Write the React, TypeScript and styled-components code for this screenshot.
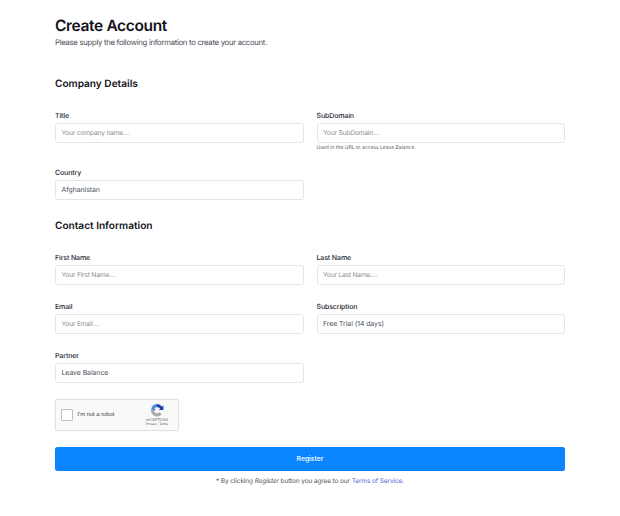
import React from "react";
import styled, { createGlobalStyle } from "styled-components";

const GlobalStyle = createGlobalStyle`
  html, body { margin: 0; padding: 0; background: #fff; }
  body {
    font-family: Inter, "Noto Sans", sans-serif;
    color: #12131a;
    text-rendering: geometricPrecision;
  }
  * { box-sizing: border-box; }
`;

const Page = styled.div`
  width: 620px;
  height: 516px;
  padding: 15px 55px 0;
  overflow: hidden;
  opacity: 0.999;
`;

const Title = styled.h1`
  margin: 0;
  font-size: 15.5px;
  line-height: 21px;
  font-weight: 600;
  letter-spacing: -0.35px;
`;

const Lead = styled.p`
  margin: 1px 0 0;
  font-size: 7.7px;
  line-height: 12px;
  letter-spacing: -0.27px;
  color: #4a4d57;
`;

const SectionTitle = styled.h2<{ $top: number }>`
  margin: ${(p) => p.$top}px 0 18px;
  font-size: 10.1px;
  line-height: 14px;
  font-weight: 600;
`;

const Row = styled.div<{ $gap?: number }>`
  display: grid;
  grid-template-columns: 248.5px 248.5px;
  column-gap: 13px;
  margin-bottom: ${(p) => p.$gap ?? 0}px;
`;

const Field = styled.div`
  min-width: 0;
`;

const Label = styled.label`
  display: block;
  height: 14px;
  font-size: 7px;
  line-height: 14px;
  font-weight: 500;
  letter-spacing: -0.12px;
  color: #23252d;
`;

const Control = styled.div<{ $filled?: boolean }>`
  height: 20px;
  padding: 0 5.5px;
  display: flex;
  align-items: center;
  border: 1px solid #e3e5ea;
  border-radius: 2.5px;
  background: #fff;
  font-size: ${(p) => (p.$filled ? 6.9 : 6.7)}px;
  letter-spacing: ${(p) => (p.$filled ? -0.05 : -0.2)}px;
  color: ${(p) => (p.$filled ? "#4a4d57" : "#8d9098")};
`;

const Help = styled.small`
  display: block;
  margin-top: 1.5px;
  font-size: 5px;
  line-height: 7px;
  color: #5d6069;
`;

const Captcha = styled.div`
  width: 124px;
  height: 32px;
  margin-top: 16px;
  padding: 0 5px;
  display: flex;
  align-items: center;
  border: 1px solid #e0e0e0;
  border-radius: 1.5px;
  background: #f9f9f9;
  box-shadow: 0 0 2px rgba(0, 0, 0, 0.06);
`;

const Tick = styled.span`
  width: 12px;
  height: 12px;
  border: 1px solid #c1c1c1;
  border-radius: 1px;
  background: #fff;
`;

const RobotText = styled.span`
  margin-left: 4.5px;
  font-family: "Liberation Sans", Arial, sans-serif;
  font-size: 5.8px;
  color: #333;
`;

const Badge = styled.div`
  margin-left: auto;
  width: 32px;
  display: flex;
  flex-direction: column;
  align-items: center;
  font-family: "Liberation Sans", Arial, sans-serif;
  color: #555;
`;

const BadgeName = styled.span`
  font-size: 3.9px;
  line-height: 5px;
`;

const BadgeLinks = styled.span`
  font-size: 3.2px;
  line-height: 4px;
`;

const Register = styled.button`
  display: block;
  width: 510px;
  height: 24px;
  margin-top: 16px;
  border: 0;
  border-radius: 2.5px;
  background: #0a84ff;
  color: #fff;
  font-family: inherit;
  font-size: 6.8px;
  font-weight: 500;
`;

const Terms = styled.p`
  margin: 5px 0 0;
  text-align: center;
  font-size: 6.5px;
  line-height: 10px;
  letter-spacing: -0.11px;
  color: #555862;
  em {
    font-style: italic;
  }
  a {
    color: #5468d4;
    text-decoration: none;
  }
`;

function RecaptchaLogo() {
  return (
    <svg width="14" height="14" viewBox="0 0 14 14" fill="none">
      <path d="M1.8 4A6 6 0 0 1 7 1v3.2A3 3 0 0 0 4.5 5.6L6 7H1.2Z" fill="#4a90e2" />
      <path d="M7 1a6 6 0 0 1 5 2.7L13.4 2.4V7H8.8l1.4-1.4A3.4 3.4 0 0 0 7 4.2Z" fill="#1c3aa9" />
      <path d="M1 7h4.4L4 8.4A3.6 3.6 0 0 0 9.6 9.2l2.2 2.2A6.2 6.2 0 0 1 1 7Z" fill="#ababab" />
    </svg>
  );
}

export default function App() {
  return (
    <Page>
      <GlobalStyle />
      <Title>Create Account</Title>
      <Lead>Please supply the following information to create your account.</Lead>

      <SectionTitle $top={28}>Company Details</SectionTitle>
      <Row $gap={14}>
        <Field>
          <Label>Title</Label>
          <Control>Your company name....</Control>
        </Field>
        <Field>
          <Label>SubDomain</Label>
          <Control>Your SubDomain....</Control>
          <Help>Used in the URL to access Leave Balance.</Help>
        </Field>
      </Row>
      <Row>
        <Field>
          <Label>Country</Label>
          <Control $filled>Afghanistan</Control>
        </Field>
      </Row>

      <SectionTitle $top={19}>Contact Information</SectionTitle>
      <Row $gap={15}>
        <Field>
          <Label>First Name</Label>
          <Control>Your First Name....</Control>
        </Field>
        <Field>
          <Label>Last Name</Label>
          <Control>Your Last Name....</Control>
        </Field>
      </Row>
      <Row $gap={15}>
        <Field>
          <Label>Email</Label>
          <Control>Your Email....</Control>
        </Field>
        <Field>
          <Label>Subscription</Label>
          <Control $filled>Free Trial (14 days)</Control>
        </Field>
      </Row>
      <Row>
        <Field>
          <Label>Partner</Label>
          <Control $filled>Leave Balance</Control>
        </Field>
      </Row>

      <Captcha>
        <Tick />
        <RobotText>I'm not a robot</RobotText>
        <Badge>
          <RecaptchaLogo />
          <BadgeName>reCAPTCHA</BadgeName>
          <BadgeLinks>Privacy - Terms</BadgeLinks>
        </Badge>
      </Captcha>

      <Register>Register</Register>
      <Terms>
        * By clicking <em>Register</em> button you agree to our <a href="#terms">Terms of Service.</a>
      </Terms>
    </Page>
  );
}
